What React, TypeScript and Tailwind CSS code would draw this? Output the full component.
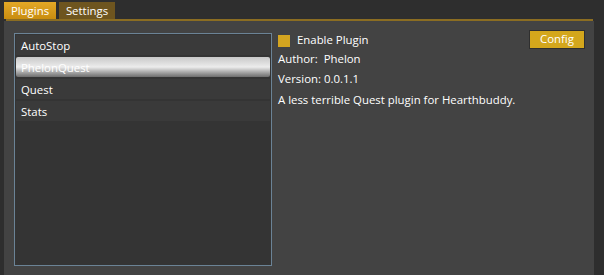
import React from "react";

const plugins = ["AutoStop", "PhelonQuest", "Quest", "Stats"];

export default function App() {
  return (
    <div
      className="w-[604px] h-[275px] bg-[#2e2e2e] text-[11.4px] text-white flex flex-col overflow-hidden"
      style={{ fontFamily: '"Open Sans", "Noto Sans", sans-serif' }}
    >
      {/* Tabs */}
      <div className="flex items-end gap-[3px] pl-[4px] pt-[2px] h-[19px]">
        <div className="h-[17px] w-[52px] flex items-center justify-center bg-gradient-to-b from-[#e3a826] to-[#c98d0f] leading-none">
          Plugins
        </div>
        <div className="h-[17px] w-[56px] flex items-center justify-center bg-[#6e551f] leading-none">
          Settings
        </div>
      </div>
      <div className="h-[2px] ml-[6px] mr-[11px] bg-[#8b6d22]" />

      {/* Panel */}
      <div className="flex-1 ml-[4px] mr-[10px] bg-[#434343] flex pt-[12px] pb-[9px] pl-[10px]">
        {/* List */}
        <div className="w-[258px] border border-[#6b8396] bg-[#343434] p-[1px] flex flex-col gap-[2px]">
          {plugins.map((p) =>
            p === "PhelonQuest" ? (
              <div
                key={p}
                className="h-[20px] pl-[5px] pt-[1px] flex items-center rounded-[2px] bg-gradient-to-b from-[#c8c8c8] via-[#ececec] to-[#6e6e6e]"
              >
                {p}
              </div>
            ) : (
              <div key={p} className="h-[20px] pl-[5px] pt-[1px] flex items-center bg-[#3a3a3a]">
                {p}
              </div>
            )
          )}
        </div>

        {/* Details */}
        <div className="flex-1 pl-[6px] pr-[9px] flex flex-col">
          <div className="flex items-center justify-between h-[16px] -mt-[1px]">
            <div className="flex items-center gap-[7px]">
              <div className="w-[12px] h-[12px] mt-[1px] bg-[#d4a520]" />
              <span>Enable Plugin</span>
            </div>
            <div className="h-[19px] w-[56px] -mt-[2px] border border-[#2f2f2f] bg-[#d4a71c] flex items-center justify-center">
              Config
            </div>
          </div>
          <div className="h-[19px] mt-[1px] flex items-center">Author:&nbsp; Phelon</div>
          <div className="h-[21px] flex items-center">Version: 0.0.1.1</div>
          <div className="h-[22px] flex items-center">A less terrible Quest plugin for Hearthbuddy.</div>
        </div>
      </div>
    </div>
  );
}
